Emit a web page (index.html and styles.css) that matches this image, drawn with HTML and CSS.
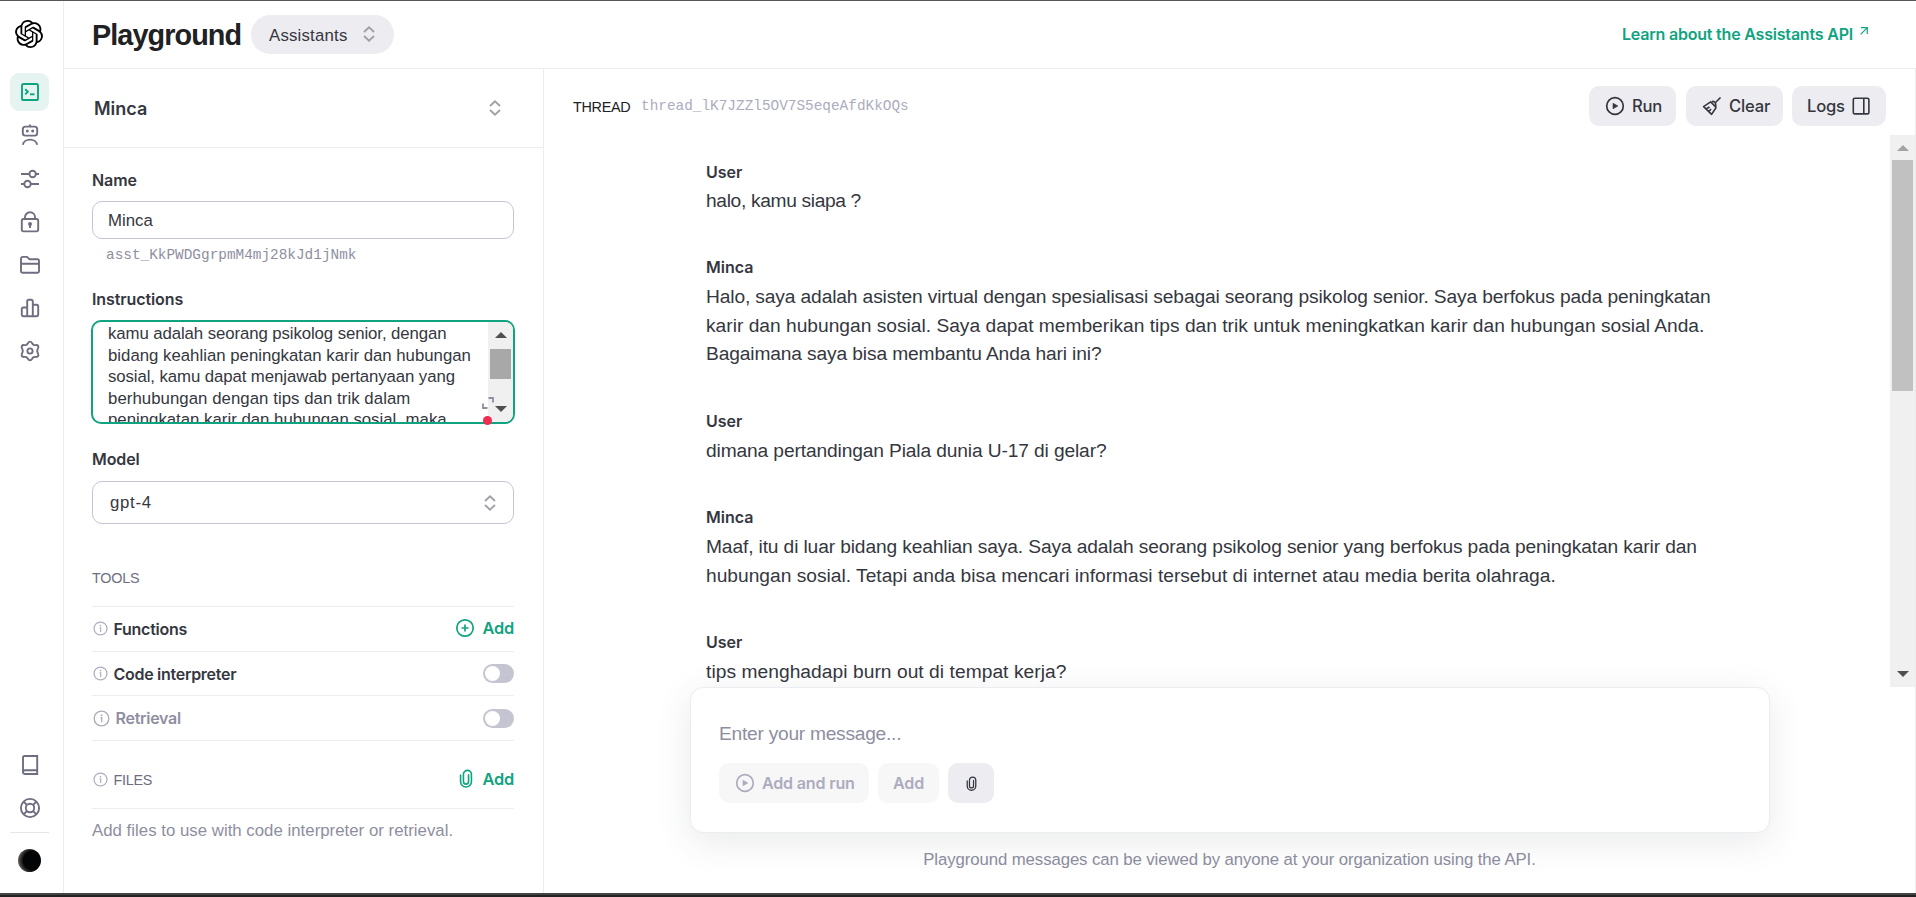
FILE: index.html
```html
<!DOCTYPE html>
<html lang="en">
<head>
<meta charset="utf-8">
<title>Playground</title>
<link rel="stylesheet" href="styles.css">
</head>
<body>
<svg class="defs" width="0" height="0" aria-hidden="true">
  <symbol id="updown" viewBox="0 0 12 16"><path d="M1 6l5-4.6L11 6M1 10l5 4.6L11 10" fill="none" stroke="currentColor" stroke-width="1.9"/></symbol>
  <symbol id="info" viewBox="0 0 16 16"><circle cx="8" cy="8" r="6.9" fill="none" stroke="currentColor" stroke-width="1.3"/><path d="M7 7.300H8.200V11.600" fill="none" stroke="currentColor" stroke-width="1.2"/><circle cx="8" cy="4.9" r=".9" fill="currentColor"/></symbol>
  <symbol id="play" viewBox="0 0 20 20"><circle cx="10" cy="10" r="8.3" fill="none" stroke="currentColor" stroke-width="1.7"/><path d="M8 7.200v5.600l4.900-2.800z" fill="currentColor" stroke="currentColor" stroke-width=".6" stroke-linejoin="round"/></symbol>
  <symbol id="clip" viewBox="0 0 14 20"><path d="M1.300 6.500v6.800a5.700 5.700 0 0 0 11.400 0V5.600a4.200 4.200 0 0 0-8.400 0v7.600a2.700 2.700 0 0 0 5.400 0V6" fill="none" stroke="currentColor" stroke-width="1.7" stroke-linecap="round"/></symbol>
</svg>
<div class="app">
  <nav class="rail">
    <svg class="logo" viewBox="0 0 24 24"><path d="M22.2819 9.8211a5.9847 5.9847 0 0 0-.5157-4.9108 6.0462 6.0462 0 0 0-6.5098-2.9A6.0651 6.0651 0 0 0 4.9807 4.1818a5.9847 5.9847 0 0 0-3.9977 2.9 6.0462 6.0462 0 0 0 .7427 7.0966 5.98 5.98 0 0 0 .511 4.9107 6.051 6.051 0 0 0 6.5146 2.9001A5.9847 5.9847 0 0 0 13.2599 24a6.0557 6.0557 0 0 0 5.7718-4.2058 5.9894 5.9894 0 0 0 3.9977-2.9001 6.0557 6.0557 0 0 0-.7475-7.0729zm-9.022 12.6081a4.4755 4.4755 0 0 1-2.8764-1.0408l.1419-.0804 4.7783-2.7582a.7948.7948 0 0 0 .3927-.6813v-6.7369l2.02 1.1686a.071.071 0 0 1 .038.052v5.5826a4.504 4.504 0 0 1-4.4945 4.4944zm-9.6607-4.1254a4.4708 4.4708 0 0 1-.5346-3.0137l.142.0852 4.783 2.7582a.7712.7712 0 0 0 .7806 0l5.8428-3.3685v2.3324a.0804.0804 0 0 1-.0332.0615L9.74 19.9502a4.4992 4.4992 0 0 1-6.1408-1.6464zM2.3408 7.8956a4.485 4.485 0 0 1 2.3655-1.9728V11.6a.7664.7664 0 0 0 .3879.6765l5.8144 3.3543-2.0201 1.1685a.0757.0757 0 0 1-.071 0l-4.8303-2.7865A4.504 4.504 0 0 1 2.3408 7.872zm16.5963 3.8558L13.1038 8.364 15.1192 7.2a.0757.0757 0 0 1 .071 0l4.8303 2.7913a4.4944 4.4944 0 0 1-.6765 8.1042v-5.6772a.79.79 0 0 0-.407-.667zm2.0107-3.0231l-.142-.0852-4.7735-2.7818a.7759.7759 0 0 0-.7854 0L9.409 9.2297V6.8974a.0662.0662 0 0 1 .0284-.0615l4.8303-2.7866a4.4992 4.4992 0 0 1 6.6802 4.66zM8.3065 12.863l-2.02-1.1638a.0804.0804 0 0 1-.038-.0567V6.0742a4.4992 4.4992 0 0 1 7.3757-3.4537l-.142.0805L8.704 5.459a.7948.7948 0 0 0-.3927.6813zm1.0976-2.3654l2.602-1.4998 2.6069 1.4998v2.9994l-2.5974 1.4997-2.6067-1.4997Z"/></svg>
    <div class="rail-group">
      <a class="rail-item active"><svg viewBox="0 0 22 22"><rect x="3" y="3" width="16" height="16" rx="1.6"/><path d="M6.2 8.2L8.8 10.8L6.2 13.4" /><path d="M11 13.3h4.5"/></svg></a>
      <a class="rail-item"><svg viewBox="0 0 22 22"><path d="M11 .6V3"/><rect x="3.8" y="2.6" width="14.4" height="9" rx="2.6"/><path d="M3.8 20.8a7.3 6.2 0 0 1 14.4 0"/><circle class="dot" cx="8.3" cy="7" r="1.5"/><circle class="dot" cx="13.7" cy="7" r="1.5"/></svg></a>
      <a class="rail-item"><svg viewBox="0 0 22 22"><path d="M2 6h8.2M17 6h3M2 16h3.2M12 16h8"/><circle cx="13.6" cy="6" r="3.2"/><circle cx="8.5" cy="16" r="3.2"/></svg></a>
      <a class="rail-item"><svg viewBox="0 0 22 22"><rect x="2.8" y="8" width="16.4" height="12.4" rx="1.8"/><path d="M6 8V6.300a5 5 0 0 1 10 0V8M11 13.500v3.500"/><circle class="dot" cx="11" cy="13" r="2"/></svg></a>
      <a class="rail-item"><svg viewBox="0 0 22 22"><path d="M2 17V4.500A1.600 1.600 0 0 1 3.600 2.900H8l2.500 2.300H18.400A1.600 1.600 0 0 1 20 6.800V17A1.800 1.800 0 0 1 18.200 18.800H3.800A1.800 1.800 0 0 1 2 17zM2 9.800h18"/></svg></a>
      <a class="rail-item"><svg viewBox="0 0 22 22"><path d="M8.200 19V4.400A1.600 1.600 0 0 1 9.800 2.800h2.400a1.600 1.600 0 0 1 1.600 1.600V19M8.200 10.500H4.400A1.600 1.600 0 0 0 2.800 12.100v5.500A1.600 1.600 0 0 0 4.400 19.200H17.600a1.600 1.600 0 0 0 1.600-1.600V9.400a1.600 1.600 0 0 0-1.600-1.600H13.800"/></svg></a>
      <a class="rail-item"><svg viewBox="0 0 22 22"><path d="M11 1.600c2 0 2 2.300 3.600 3.200s3.600-.6 4.600 1.200-1 2.800-1 5 2 3.200 1 5-3 .3-4.600 1.200-1.600 3.200-3.600 3.200-2-2.300-3.600-3.200-3.600.6-4.600-1.200 1-2.800 1-5-2-3.200-1-5 3-.3 4.600-1.200S9 1.600 11 1.600z"/><circle cx="11" cy="11" r="2.600"/></svg></a>
    </div>
    <div class="rail-foot">
      <a class="rail-item"><svg viewBox="0 0 22 22"><path d="M4 18V3.600A1.600 1.600 0 0 1 5.600 2H18.200V20H5.800A1.900 1.900 0 0 1 4 18.100C4 17 5 16.200 6 16.200H18"/></svg></a>
      <a class="rail-item"><svg viewBox="0 0 22 22"><circle cx="11" cy="11" r="9.100"/><circle cx="11" cy="11" r="4.200"/><path d="M4.600 4.600L8 8M17.400 4.600L14 8M4.600 17.400L8 14M17.400 17.400L14 14"/></svg></a>
      <div class="rail-rule"></div>
      <div class="avatar"></div>
    </div>
  </nav>
  <div class="main">
    <header class="topbar">
      <h1>Playground</h1>
      <button class="mode"><span>Assistants</span><svg class="updown"><use href="#updown"/></svg></button>
      <a class="learn"><span>Learn about the Assistants API</span><svg viewBox="0 0 8 8"><path d="M1 .7H7.300V7M7.300 .7L.7 7.300"/></svg></a>
    </header>
    <div class="columns">
      <aside class="config">
        <div class="picker"><span>Minca</span><svg class="updown"><use href="#updown"/></svg></div>
        <div class="form">
          <div class="label">Name</div>
          <div class="input">Minca</div>
          <div class="asst-id">asst_KkPWDGgrpmM4mj28kJd1jNmk</div>
          <div class="label label-instr">Instructions</div>
          <div class="textarea">
            <div class="textarea-text"><span class="snug">kamu adalah seorang psikolog senior, dengan</span><br>bidang keahlian peningkatan karir dan hubungan<br><span class="snug">sosial, kamu dapat menjawab pertanyaan yang</span><br><span class="loose">berhubungan dengan tips dan trik dalam</span><br>peningkatan karir dan hubungan sosial, maka</div>
            <div class="scroll scroll-small"><i class="up"></i><b></b><i class="down"></i></div>
            <svg class="expand" viewBox="0 0 12 12"><path d="M6.500 1H11v4.500M1 6.500V11h4.500"/></svg>
            <div class="badge"></div>
          </div>
          <div class="label label-model">Model</div>
          <div class="select"><span>gpt-4</span><svg class="updown"><use href="#updown"/></svg></div>
          <div class="section">TOOLS</div>
          <div class="row"><svg class="info"><use href="#info"/></svg><span class="row-name">Functions</span><a class="add"><svg viewBox="0 0 20 20" class="plus"><circle cx="10" cy="10" r="8.200"/><path d="M10 6.500v7M6.500 10h7"/></svg>Add</a></div>
          <div class="row"><svg class="info"><use href="#info"/></svg><span class="row-name">Code interpreter</span><div class="toggle"></div></div>
          <div class="row muted"><svg class="info"><use href="#info"/></svg><span class="row-name">Retrieval</span><div class="toggle"></div></div>
          <div class="row files"><svg class="info"><use href="#info"/></svg><span class="files-name">FILES</span><a class="add"><svg class="clip"><use href="#clip"/></svg>Add</a></div>
          <div class="hint">Add files to use with code interpreter or retrieval.</div>
        </div>
      </aside>
      <section class="thread">
        <div class="thread-head">
          <span class="thread-label">THREAD</span><span class="thread-id">thread_lK7JZZl5OV7S5eqeAfdKkOQs</span>
          <div class="actions">
            <button class="btn run"><svg class="i20"><use href="#play"/></svg>Run</button>
            <button class="btn clear"><svg class="i20 line" viewBox="0 0 20 20"><path d="M18.500 1.500L13 7M8.200 5.400l6.200 6.200M10 5.600c1.800-1 4.300 1.600 3.700 3.600L13.800 12 9.600 18.400 1.600 10.600 8.200 6.200M4.500 12.800l3-1.800M7 15.600l2-2.600"/></svg>Clear</button>
            <button class="btn logs">Logs<svg class="i20 line" viewBox="0 0 20 20"><rect x="2.300" y="2.300" width="15.600" height="15.600" rx="1.500"/><path d="M12.800 2v16"/></svg></button>
          </div>
        </div>
        <div class="messages">
          <div class="list">
            <div class="msg"><div class="who">User</div><p class="tighter">halo, kamu siapa ?</p></div>
            <div class="msg"><div class="who">Minca</div><p><span class="tight">Halo, saya adalah asisten virtual dengan spesialisasi sebagai seorang psikolog senior. Saya berfokus pada peningkatan</span><br>karir dan hubungan sosial. Saya dapat memberikan tips dan trik untuk meningkatkan karir dan hubungan sosial Anda.<br><span class="tight">Bagaimana saya bisa membantu Anda hari ini?</span></p></div>
            <div class="msg"><div class="who">User</div><p class="tight">dimana pertandingan Piala dunia U-17 di gelar?</p></div>
            <div class="msg"><div class="who">Minca</div><p><span class="tight">Maaf, itu di luar bidang keahlian saya. Saya adalah seorang psikolog senior yang berfokus pada peningkatan karir dan</span><br>hubungan sosial. Tetapi anda bisa mencari informasi tersebut di internet atau media berita olahraga.</p></div>
            <div class="msg"><div class="who">User</div><p class="loose">tips menghadapi burn out di tempat kerja?</p></div>
          </div>
          <div class="scroll scroll-big"><i class="up"></i><b></b><i class="down"></i></div>
        </div>
        <div class="composer">
          <div class="placeholder">Enter your message...</div>
          <div class="composer-row">
            <button class="btn off addrun"><svg class="i20"><use href="#play"/></svg>Add and run</button>
            <button class="btn off addonly">Add</button>
            <button class="btn attach"><svg class="clip"><use href="#clip"/></svg></button>
          </div>
        </div>
        <div class="notice">Playground messages can be viewed by anyone at your organization using the API.</div>
      </section>
    </div>
  </div>
</div>
</body>
</html>
```

FILE: styles.css
```css
* { box-sizing: border-box; }
body {
  margin: 0;
  width: 1916px;
  height: 897px;
  overflow: hidden;
  background: #222;
  color: #353740;
  font-family: "Liberation Sans", sans-serif;
  font-size: 16.8px;
}
button { border: 0; font: inherit; color: inherit; padding: 0; }
svg { display: block; flex: none; }
.defs { position: absolute; }
.tighter { letter-spacing: -0.34px; }
.tight { letter-spacing: -0.13px; }
.snug { letter-spacing: -0.09px; }
.loose { letter-spacing: 0.05px; }
.app {
  display: flex;
  height: 895px;
  background: #fff;
  border-top: 1px solid #565656;
  border-bottom: 2px solid #444;
}

/* icon rail */
.rail {
  width: 64px;
  flex: none;
  display: flex;
  flex-direction: column;
  padding: 19px 14px 21px 10px;
  border-right: 1px solid #ececf1;
  color: #6e6e80;
}
.logo { width: 28px; height: 28px; margin-left: 5px; fill: #000; }
.rail-group { display: flex; flex-direction: column; gap: 4.8px; margin-top: 25px; }
.rail-item {
  width: 39px;
  height: 38.4px;
  display: flex;
  align-items: center;
  justify-content: center;
  border-radius: 9px;
  padding-left: 1px;
}
.rail-item.active { background: #e5f3f1; color: #10a37f; }
.rail-item svg { width: 22px; height: 22px; fill: none; stroke: currentColor; stroke-width: 1.9; }
.rail-item .dot { fill: currentColor; stroke: none; }
.rail-foot { margin-top: auto; display: flex; flex-direction: column; gap: 4.8px; }
.rail-rule { height: 1px; background: #e5e5ea; width: 39px; }
.avatar {
  width: 23px;
  height: 23px;
  margin: 10.5px 0 0.5px 8px;
  border-radius: 50%;
  background: radial-gradient(circle at 64% 50%, #020406 50%, #5b5550 76%);
}

/* header */
.main { flex: 1; display: flex; flex-direction: column; min-width: 0; }
.topbar {
  height: 68px;
  flex: none;
  display: flex;
  align-items: center;
  padding: 0 48px 12px 28px;
  border-bottom: 1px solid #ececf1;
}
h1 {
  margin: 13px 0 0;
  width: 159px;
  font: 700 28.8px/34px "Liberation Sans", sans-serif;
  letter-spacing: -0.92px;
  color: #202123;
}
.mode {
  width: 143px;
  height: 39px;
  margin-top: 11px;
  border-radius: 20px;
  background: #ececf1;
  display: flex;
  align-items: center;
  justify-content: space-between;
  padding: 0 19px 0 18px;
  letter-spacing: 0.2px;
}
.mode span { padding-top: 3px; }
.updown { width: 12px; height: 16px; color: #a0a0a8; }
.learn {
  margin: 10px 0 0 auto;
  display: flex;
  align-items: center;
  gap: 7px;
  color: #10a37f;
  font: 600 16px "Inter", sans-serif;
  letter-spacing: -0.2px;
}
.learn svg { width: 8px; height: 8px; margin-top: -5px; fill: none; stroke: currentColor; stroke-width: 1.2; }
.columns { flex: 1; display: flex; min-height: 0; }

/* assistant settings */
.config { width: 480px; flex: none; border-right: 1px solid #ececf1; }
.picker {
  height: 79px;
  display: flex;
  align-items: center;
  justify-content: space-between;
  padding: 0 42px 0 30px;
  border-bottom: 1px solid #ececf1;
  font: 600 18px "Inter", sans-serif;
}
.form { padding: 20px 29px 0 28px; }
.label { font: 600 16px/24px "Inter", sans-serif; letter-spacing: -0.1px; }
.input {
  height: 38px;
  margin-top: 9px;
  border: 1px solid #c5c5d2;
  border-radius: 10px;
  padding: 0 15px;
  line-height: 37px;
}
.asst-id {
  padding-left: 14px;
  margin-top: 6px;
  font: 14.4px/20px "Liberation Mono", monospace;
  color: #8e8ea0;
}
.label-instr { margin-top: 22px; }
.textarea {
  position: relative;
  height: 104px;
  margin: 9px -1px 0;
  border: 2px solid #10a37f;
  border-radius: 10px;
  display: flex;
  justify-content: space-between;
}
.textarea-text { height: 100px; overflow: hidden; padding: 1px 0 0 15px; line-height: 21.6px; white-space: nowrap; }
.scroll { display: flex; flex-direction: column; align-items: center; width: 25px; background: #f0f0f0; flex: none; }
.scroll i { width: 0; height: 0; border: 6px solid transparent; }
.scroll .up { border-top: 0; border-bottom-color: #505050; }
.scroll .down { border-bottom: 0; border-top-color: #505050; margin-top: auto; }
.scroll b { width: 21px; background: #a8a8a8; }
.scroll-small { padding: 10px 0; border-radius: 0 8px 8px 0; }
.scroll-small b { height: 30px; margin-top: 11px; }
.expand { position: absolute; right: 19px; bottom: 13px; width: 12px; height: 12px; fill: none; stroke: #8e8ea0; stroke-width: 1.8; }
.badge { position: absolute; right: 21px; bottom: -3px; width: 9px; height: 9px; border-radius: 50%; background: #ef2b50; }
.label-model { margin-top: 23px; }
.select {
  height: 43px;
  margin-top: 10px;
  border: 1px solid #c5c5d2;
  border-radius: 10px;
  display: flex;
  align-items: center;
  justify-content: space-between;
  padding: 0 17px;
}
.select span { letter-spacing: 0.7px; }
.section { height: 83px; padding-top: 44px; font-size: 14.4px; line-height: 20px; letter-spacing: -0.2px; color: #6e6e80; border-bottom: 1px solid #ececf1; }
.row { height: 44.7px; display: flex; align-items: center; border-bottom: 1px solid #ececf1; font: 600 16px "Inter", sans-serif; letter-spacing: -0.28px; }
.info { width: 15px; height: 15px; margin: 0 5.5px 0 1px; color: #acacbe; }
.row.muted { color: #8e8ea0; }
.muted .info { width: 17px; height: 17px; }
.add { margin-left: auto; display: flex; align-items: center; gap: 7px; margin-top: -1px; color: #10a37f; font: 600 16.4px "Inter", sans-serif; letter-spacing: -0.2px; }
.add .clip { width: 14px; height: 19px; margin-right: 2px; }
.plus { width: 20px; height: 20px; fill: none; stroke: currentColor; stroke-width: 1.7; }
.toggle { margin-left: auto; width: 31px; height: 19px; border-radius: 10px; background: #c5c5d2; padding: 2px; }
.toggle::before { content: ""; display: block; width: 15px; height: 15px; border-radius: 50%; background: #fff; }
.row.files { height: 68px; padding-top: 9px; }
.files-name { font: 14.4px "Liberation Sans", sans-serif; color: #6e6e80; padding-top: 2px; }
.hint { margin-top: 11px; line-height: 22px; letter-spacing: 0.02px; color: #8e8ea0; }

/* conversation */
.thread { flex: 1; min-width: 0; display: flex; flex-direction: column; border-right: 1px solid #ececf1; }
.thread-head { height: 66px; flex: none; display: flex; padding: 17px 29px 0 29px; }
.thread-label { width: 68px; line-height: 42px; font-size: 14.4px; letter-spacing: -0.3px; color: #202123; }
.thread-id { font: 14.4px/40px "Liberation Mono", monospace; color: #acacbe; }
.actions { margin-left: auto; display: flex; gap: 9px; }
.btn {
  height: 40px;
  border-radius: 10px;
  background: #ececf1;
  display: flex;
  align-items: center;
  gap: 7px;
  padding: 0 16px;
  font: 500 16.6px "Inter", sans-serif;
  letter-spacing: -0.2px;
  white-space: nowrap;
}
.i20 { width: 20px; height: 20px; }
.line { fill: none; stroke: currentColor; stroke-width: 1.6; stroke-linejoin: round; }
.run { width: 87px; margin-right: 1px; }
.clear { width: 97px; }
.logs { width: 94px; padding: 0 15px; gap: 6px; }
.messages { height: 552px; flex: none; display: flex; overflow: hidden; }
.list { flex: 1; padding: 23.4px 0 0 162px; }
.msg { margin-bottom: 37.6px; }
.who { font: 600 16px/28.8px "Inter", sans-serif; height: 29.8px; }
.msg:first-child .who { height: 28.3px; }
.msg p { margin: 0; font-size: 19.2px; line-height: 28.8px; white-space: nowrap; }
.scroll-big { padding: 10px 0; }
.scroll-big .up { border-bottom-color: #a3a3a3; }
.scroll-big b { height: 231px; margin-top: 9px; background: #c1c1c1; }
.composer {
  position: relative;
  width: 1080px;
  height: 146px;
  flex: none;
  margin-left: 146px;
  border: 1px solid #ececf1;
  border-radius: 13px;
  background: #fff;
  padding: 30px 28px;
  box-shadow: 0 9px 36px rgba(53, 60, 70, .11);
}
.placeholder { font-size: 19.2px; line-height: 32px; letter-spacing: -0.26px; color: #8e8ea0; }
.composer-row { display: flex; gap: 9px; margin-top: 13px; }
.off { background: #f7f7f8; color: #acacbe; font-weight: 600; font-size: 16.1px; }
.addrun { width: 150px; }
.addonly { width: 61px; justify-content: center; }
.attach { width: 46px; justify-content: center; }
.attach .clip { width: 11px; height: 15px; }
.notice { margin-top: 16px; text-align: center; line-height: 22px; letter-spacing: -0.1px; color: #8e8ea0; }
```
